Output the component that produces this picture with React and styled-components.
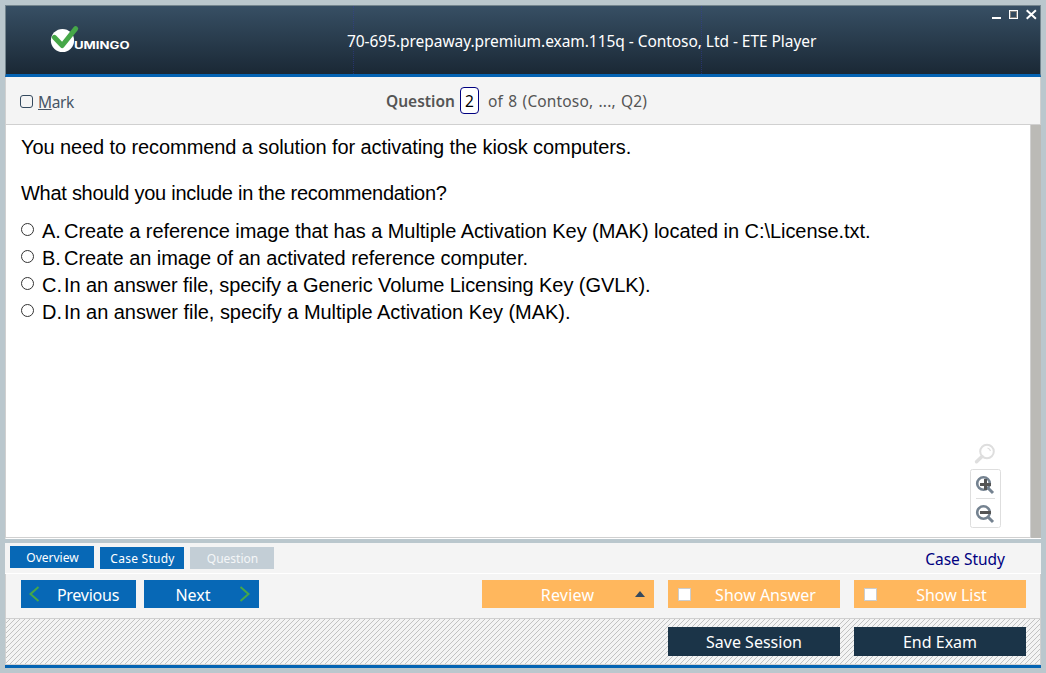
import React from "react";
import styled, { createGlobalStyle } from "styled-components";

const Global = createGlobalStyle`
  *, *::before, *::after { box-sizing: border-box; }
  body { margin: 0; background: #bac7cd; }
`;

const ui = `"Noto Sans", "Open Sans", sans-serif`;

const Desktop = styled.div`
  height: 673px;
  width: 1046px;
  padding: 5px;
  background: #bac7cd;
  font-family: ${ui};
  overflow: hidden;
`;

const Window = styled.div`
  display: flex;
  flex-direction: column;
  width: 1036px;
  height: 663px;
`;

const Header = styled.header`
  display: flex;
  flex: 0 0 72px;
  border: 1px solid #74858e;
  border-bottom: 3px solid #0463b3;
  background: linear-gradient(#374f64, #1a2835);
`;

const Brand = styled.div`
  width: 348px;
  padding: 19px 0 0 44px;
  border-right: 1px dotted rgba(50, 60, 170, 0.45);
`;

const TitleCell = styled.div`
  display: flex;
  width: 348px;
  border-right: 1px dotted rgba(50, 60, 170, 0.45);
`;

const Title = styled.h1`
  margin: 0 0 0 -7px;
  padding-top: 2px;
  font-size: 15.5px;
  font-weight: 400;
  line-height: 66px;
  color: #fff;
  white-space: nowrap;
  letter-spacing: -0.055px;
`;

const WindowControls = styled.div`
  margin-left: auto;
  padding: 2px 2px 0 0;
`;

const QuestionBar = styled.div`
  display: flex;
  align-items: center;
  flex: 0 0 48px;
  padding-left: 14px;
  border: solid #d0d0d0;
  border-width: 0 1px 1px;
  background: #f4f4f4;
  color: #555;
  font-size: 15.5px;
  white-space: nowrap;
`;

const MarkBox = styled.span`
  width: 13px;
  height: 13px;
  margin: -1px 5px 0 0;
  border: 1px solid #34495e;
  border-radius: 3px;
`;

const MarkLabel = styled.label`
  display: flex;
  align-items: center;
  width: 366px;
  color: #465566;
  letter-spacing: -0.4px;
  padding-top: 2px;
`;

const QuestionWord = styled.strong`
  width: 74px;
  font-weight: 600;
`;

const NumberBox = styled.span`
  width: 19px;
  height: 27px;
  margin-right: 9px;
  border: 1px solid #000080;
  border-radius: 4px;
  background: #fff;
  color: #000;
  text-align: center;
  line-height: 26px;
`;

const Position = styled.span`
  letter-spacing: 0.15px;
  word-spacing: 1.1px;
`;

const Content = styled.main`
  display: flex;
  flex: 0 0 414px;
  border-left: 1px solid #d0d0d0;
  border-bottom: 1px solid #fff;
  background: #fff;
`;

const Page = styled.div`
  position: relative;
  flex: 1;
  padding: 10px 0 0 15px;
  border: solid #d0d0d0;
  border-width: 0 1px 1px 0;
  font-family: "Liberation Sans", Arial, sans-serif;
  font-size: 20px;
  color: #000;
  white-space: nowrap;
`;

const ScrollTrack = styled.div`
  width: 10px;
  background: #bbbab6;
`;

const Paragraph = styled.p`
  margin: 0 0 22px;
  line-height: 24px;
  letter-spacing: ${(p) => p.$spacing};
`;

const Options = styled.div`
  margin-top: -9px;
`;

const Option = styled.label`
  display: flex;
  height: 27px;
  line-height: 27px;
`;

const Radio = styled.span`
  width: 13px;
  height: 13px;
  margin: 5px 8px 0 0;
  border: 1px solid #333;
  border-radius: 50%;
`;

const Letter = styled.span`
  width: 22px;
`;

const OptionText = styled.span`
  letter-spacing: ${(p) => p.$spacing};
`;

const ZoomTools = styled.div`
  position: absolute;
  right: 28px;
  bottom: 9px;
  width: 34px;
  height: 90px;
`;

const BottomPanel = styled.footer`
  display: flex;
  flex-direction: column;
  flex: 1;
  margin-top: 4px;
`;

const Tabs = styled.nav`
  display: flex;
  gap: 6px;
  flex: 0 0 31px;
  padding: 4px 36px 0 5px;
  border-bottom: 1px solid #fff;
  background: #f4f4f4;
`;

const Tab = styled.button`
  width: 84px;
  height: 22px;
  margin: ${(p) => (p.$raised ? "-1px" : "0")} 0 0;
  padding: 1px 0 0 1px;
  border: 0;
  background: ${(p) => (p.$current ? "#c3ced6" : "#0768b6")};
  color: ${(p) => (p.$current ? "#f4f6f8" : "#fff")};
  font: 12px/21px ${ui};
  letter-spacing: ${(p) => p.$spacing || "0"};
`;

const CaseLink = styled.a`
  margin-left: auto;
  color: #000080;
  font-size: 15.5px;
  line-height: 24px;
`;

const Row = styled.div`
  display: flex;
  border: solid #d0d0d0;
  border-width: 0 1px 1px;
  padding-right: 14px;
`;

const NavRow = styled(Row)`
  flex: 0 0 45px;
  padding-left: 15px;
  padding-top: 6px;
  background: #f4f4f4;
`;

const SessionRow = styled(Row)`
  flex: 0 0 46px;
  justify-content: flex-end;
  gap: 14px;
  padding-top: 8px;
  background: #f4f4f4 repeating-linear-gradient(135deg, #f4f4f4 0 2.5px, #c2c2c2 2.6px 3.5355px);
`;

const BlueEdge = styled.div`
  height: 3px;
  background: #0463b3;
`;

const Action = styled.button`
  display: flex;
  align-items: center;
  width: ${(p) => p.$width || 172}px;
  height: 28px;
  padding: 0;
  border: 0;
  background: ${(p) => p.$color};
  color: #fff;
  font: 16px/28px ${ui};
`;

const SessionButton = styled(Action)`
  height: 29px;
  line-height: 27px;
`;

const ActionLabel = styled.span`
  flex: 1;
  padding-top: 2px;
  margin-left: ${(p) => p.$shift || 0}px;
  text-align: center;
  letter-spacing: ${(p) => p.$spacing || "0"};
`;

const Pair = styled.div`
  display: flex;
  gap: 8px;
`;

const Toggles = styled.div`
  display: flex;
  gap: 14px;
  margin-left: auto;
`;

const WhiteCheck = styled.span`
  width: 13px;
  height: 13px;
  margin: 1px 0 0 10px;
  border: 1px solid #ccc;
  background: #fff;
`;

const Chevron = ({ next }) => (
  <svg width="26" height="28" viewBox="0 0 26 28">
    <path d={next ? "M7.5 7 L15.5 14 L7.5 21" : "M17.5 7 L9.5 14 L17.5 21"} fill="none" stroke="#46a748" strokeWidth="2" />
  </svg>
);

const Logo = () => (
  <svg width="84" height="30" viewBox="0 0 84 30">
    <circle cx="12.5" cy="15.5" r="11.6" fill="#fff" />
    <path d="M4.3 12.3 L12.2 20.5 L25.7 3.6" fill="none" stroke="#46a748" strokeWidth="5" strokeLinecap="round" strokeLinejoin="round" />
    <text x="24" y="23.8" fill="#fff" fontFamily="Inter, sans-serif" fontSize="10" fontWeight="700" textLength="55.5" lengthAdjust="spacingAndGlyphs">UMINGO</text>
  </svg>
);

const Controls = () => (
  <svg width="50" height="16" viewBox="0 0 50 16">
    <path d="M4 8h9v2H4z" fill="#fff" />
    <rect x="21.5" y="1.5" width="8" height="8" fill="none" stroke="#fff" />
    <rect x="22.5" y="2.5" width="6" height="6" fill="none" stroke="#85837f" />
    <path d="M38.7 1.2 L47.9 9.8 M47.9 1.2 L38.7 9.8" stroke="#fff" strokeWidth="2" />
  </svg>
);

const ZoomIcons = () => (
  <svg width="34" height="90" viewBox="0 0 34 90">
    <g fill="none" stroke="#dedede">
      <circle cx="19" cy="13.5" r="6.8" strokeWidth="2" />
      <path d="M19.5 10 a4 4 0 0 1 3 3" strokeWidth="1.2" />
      <path d="M14 18.5 L8.5 23.8" strokeWidth="3.4" strokeLinecap="round" />
      <rect x="2.5" y="31.5" width="30" height="58" rx="2" />
      <path d="M8 60.5 H27" />
    </g>
    <g fill="none" stroke="#748290">
      <circle cx="15.5" cy="45.5" r="6.3" strokeWidth="2.6" />
      <path d="M20 50 L25 55" strokeWidth="3" />
      <circle cx="15.5" cy="74.5" r="6.3" strokeWidth="2.6" />
      <path d="M20 79 L25 84" strokeWidth="3" />
    </g>
    <path d="M12 46.5 H23 M17.5 41 V52 M12 74.5 H23" stroke="#555" strokeWidth="3" />
  </svg>
);

const options = [
  ["A.", "Create a reference image that has a Multiple Activation Key (MAK) located in C:\\License.txt.", "-0.055px"],
  ["B.", "Create an image of an activated reference computer.", "-0.06px"],
  ["C.", "In an answer file, specify a Generic Volume Licensing Key (GVLK).", "-0.075px"],
  ["D.", "In an answer file, specify a Multiple Activation Key (MAK).", "-0.045px"],
];

export default function App() {
  return (
    <Desktop>
      <Global />
      <Window>
        <Header>
          <Brand><Logo /></Brand>
          <TitleCell>
            <Title>70-695.prepaway.premium.exam.115q - Contoso, Ltd - ETE Player</Title>
          </TitleCell>
          <WindowControls><Controls /></WindowControls>
        </Header>
        <QuestionBar>
          <MarkLabel><MarkBox /><span><u>M</u>ark</span></MarkLabel>
          <QuestionWord>Question</QuestionWord>
          <NumberBox>2</NumberBox>
          <Position>of 8 (Contoso, ..., Q2)</Position>
        </QuestionBar>
        <Content>
          <Page>
            <Paragraph $spacing="-0.09px">You need to recommend a solution for activating the kiosk computers.</Paragraph>
            <Paragraph $spacing="-0.27px">What should you include in the recommendation?</Paragraph>
            <Options>
              {options.map(([letter, text, spacing]) => (
                <Option key={letter}>
                  <Radio />
                  <Letter>{letter}</Letter>
                  <OptionText $spacing={spacing}>{text}</OptionText>
                </Option>
              ))}
            </Options>
            <ZoomTools><ZoomIcons /></ZoomTools>
          </Page>
          <ScrollTrack />
        </Content>
        <BottomPanel>
          <Tabs>
            <Tab $raised>Overview</Tab>
            <Tab $spacing="0.25px">Case Study</Tab>
            <Tab $current>Question</Tab>
            <CaseLink>Case Study</CaseLink>
          </Tabs>
          <NavRow>
            <Pair>
              <Action $width={115} $color="#0768b6"><Chevron /><ActionLabel $shift={-7} $spacing="-0.25px">Previous</ActionLabel></Action>
              <Action $width={115} $color="#0768b6"><ActionLabel $shift={9}>Next</ActionLabel><Chevron next /></Action>
            </Pair>
            <Toggles>
              <Action $color="#ffb75d">
                <ActionLabel $shift={27} $spacing="0.2px">Review</ActionLabel>
                <svg width="28" height="28" viewBox="0 0 28 28"><path d="M9 17 L14 11 L19 17z" fill="#34495e" /></svg>
              </Action>
              <Action $color="#ffb75d"><WhiteCheck /><ActionLabel>Show Answer</ActionLabel></Action>
              <Action $color="#ffb75d"><WhiteCheck /><ActionLabel>Show List</ActionLabel></Action>
            </Toggles>
          </NavRow>
          <SessionRow>
            <SessionButton $color="#1b3448"><ActionLabel>Save Session</ActionLabel></SessionButton>
            <SessionButton $color="#1b3448"><ActionLabel>End Exam</ActionLabel></SessionButton>
          </SessionRow>
          <BlueEdge />
        </BottomPanel>
      </Window>
    </Desktop>
  );
}
